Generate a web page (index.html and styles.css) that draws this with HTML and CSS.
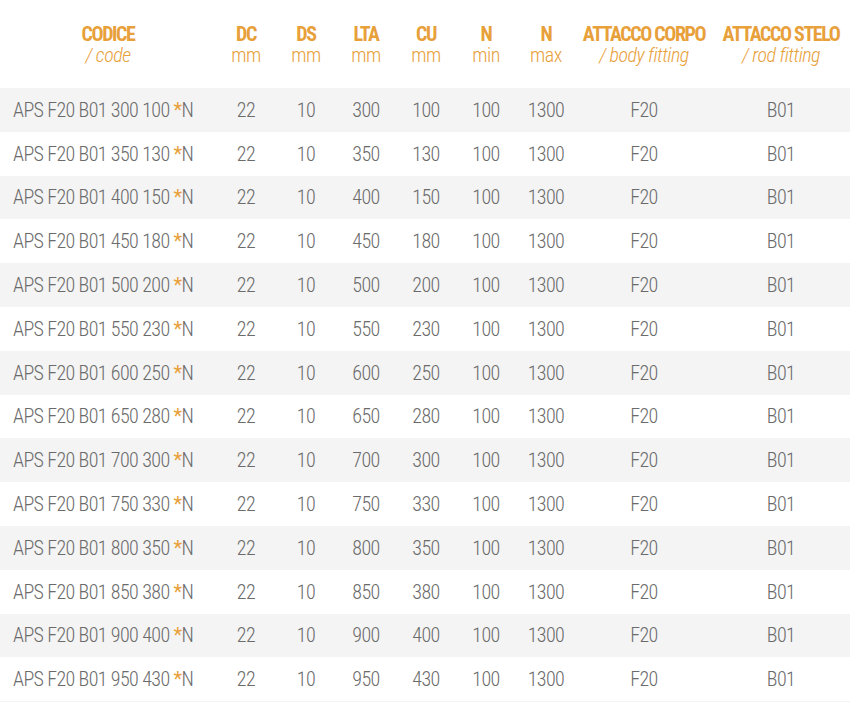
FILE: index.html
```html
<!DOCTYPE html>
<html lang="it">
<head>
<meta charset="utf-8">
<title>APS F20 B01</title>
<link rel="stylesheet" href="styles.css">
</head>
<body>
<table class="spec">
  <colgroup>
    <col class="c-code"><col class="c-num"><col class="c-num"><col class="c-num"><col class="c-num"><col class="c-num"><col class="c-num"><col class="c-fit1"><col class="c-fit2">
  </colgroup>
  <thead>
    <tr>
      <th><span class="h">CODICE</span><span class="sub it">/ code</span></th>
      <th><span class="h">DC</span><span class="sub">mm</span></th>
      <th><span class="h">DS</span><span class="sub">mm</span></th>
      <th><span class="h">LTA</span><span class="sub">mm</span></th>
      <th><span class="h">CU</span><span class="sub">mm</span></th>
      <th><span class="h">N</span><span class="sub">min</span></th>
      <th><span class="h">N</span><span class="sub">max</span></th>
      <th><span class="h">ATTACCO CORPO</span><span class="sub it">/ body fitting</span></th>
      <th><span class="h">ATTACCO STELO</span><span class="sub it">/ rod fitting</span></th>
    </tr>
  </thead>
  <tbody>
    <tr><td class="code">APS F20 B01 300 100 <span class="star">*</span>N</td><td>22</td><td>10</td><td>300</td><td>100</td><td>100</td><td>1300</td><td>F20</td><td>B01</td></tr>
    <tr><td class="code">APS F20 B01 350 130 <span class="star">*</span>N</td><td>22</td><td>10</td><td>350</td><td>130</td><td>100</td><td>1300</td><td>F20</td><td>B01</td></tr>
    <tr><td class="code">APS F20 B01 400 150 <span class="star">*</span>N</td><td>22</td><td>10</td><td>400</td><td>150</td><td>100</td><td>1300</td><td>F20</td><td>B01</td></tr>
    <tr><td class="code">APS F20 B01 450 180 <span class="star">*</span>N</td><td>22</td><td>10</td><td>450</td><td>180</td><td>100</td><td>1300</td><td>F20</td><td>B01</td></tr>
    <tr><td class="code">APS F20 B01 500 200 <span class="star">*</span>N</td><td>22</td><td>10</td><td>500</td><td>200</td><td>100</td><td>1300</td><td>F20</td><td>B01</td></tr>
    <tr><td class="code">APS F20 B01 550 230 <span class="star">*</span>N</td><td>22</td><td>10</td><td>550</td><td>230</td><td>100</td><td>1300</td><td>F20</td><td>B01</td></tr>
    <tr><td class="code">APS F20 B01 600 250 <span class="star">*</span>N</td><td>22</td><td>10</td><td>600</td><td>250</td><td>100</td><td>1300</td><td>F20</td><td>B01</td></tr>
    <tr><td class="code">APS F20 B01 650 280 <span class="star">*</span>N</td><td>22</td><td>10</td><td>650</td><td>280</td><td>100</td><td>1300</td><td>F20</td><td>B01</td></tr>
    <tr><td class="code">APS F20 B01 700 300 <span class="star">*</span>N</td><td>22</td><td>10</td><td>700</td><td>300</td><td>100</td><td>1300</td><td>F20</td><td>B01</td></tr>
    <tr><td class="code">APS F20 B01 750 330 <span class="star">*</span>N</td><td>22</td><td>10</td><td>750</td><td>330</td><td>100</td><td>1300</td><td>F20</td><td>B01</td></tr>
    <tr><td class="code">APS F20 B01 800 350 <span class="star">*</span>N</td><td>22</td><td>10</td><td>800</td><td>350</td><td>100</td><td>1300</td><td>F20</td><td>B01</td></tr>
    <tr><td class="code">APS F20 B01 850 380 <span class="star">*</span>N</td><td>22</td><td>10</td><td>850</td><td>380</td><td>100</td><td>1300</td><td>F20</td><td>B01</td></tr>
    <tr><td class="code">APS F20 B01 900 400 <span class="star">*</span>N</td><td>22</td><td>10</td><td>900</td><td>400</td><td>100</td><td>1300</td><td>F20</td><td>B01</td></tr>
    <tr><td class="code">APS F20 B01 950 430 <span class="star">*</span>N</td><td>22</td><td>10</td><td>950</td><td>430</td><td>100</td><td>1300</td><td>F20</td><td>B01</td></tr>
    <tr class="cut"><td colspan="9"></td></tr>
  </tbody>
</table>
</body>
</html>
```

FILE: styles.css
```css
html, body {
  margin: 0;
  padding: 0;
  background: #ffffff;
  overflow: hidden;
}
.spec {
  width: 850px;
  border-collapse: collapse;
  table-layout: fixed;
  font-family: Roboto, "Open Sans", sans-serif;
  font-stretch: 75%;
  font-weight: 330;
  color: #6b6b6b;
}
.c-code { width: 216px; }
.c-num { width: 60px; }
.c-fit1 { width: 136px; }
.c-fit2 { width: 138px; }

thead th {
  height: 86px;
  padding: 2px 0 0;
  vertical-align: middle;
  text-align: center;
  color: #e8a03a;
  font-weight: 300;
}
thead .h {
  display: block;
  font-weight: 700;
  font-size: 20px;
  line-height: 21px;
  letter-spacing: -1.4px;
}
thead .sub {
  display: block;
  font-size: 20px;
  line-height: 21px;
  letter-spacing: -0.5px;
}
thead .it { font-style: italic; }

tbody td {
  height: 43.8px;
  padding: 0;
  text-align: center;
  vertical-align: middle;
  font-size: 20px;
  letter-spacing: -0.6px;
  white-space: nowrap;
}
tbody td.code {
  text-align: left;
  padding-left: 13px;
}
tbody tr:nth-child(odd) { background: #f4f4f4; }
.star { color: #e8a03a; font-weight: 400; }
tr.cut td { height: 10px; }
```
